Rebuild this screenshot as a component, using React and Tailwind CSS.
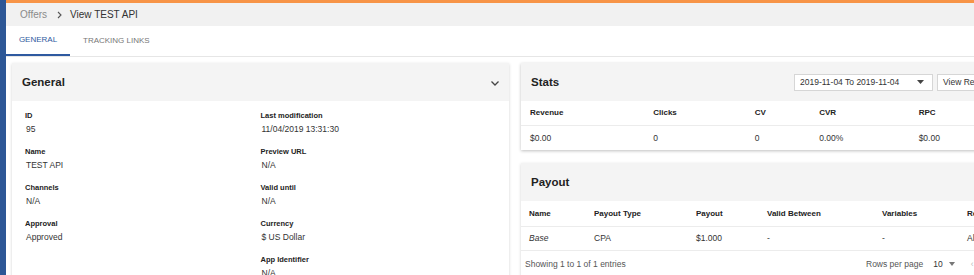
import React from 'react'

const generalLeft = [
  ['ID', '95'],
  ['Name', 'TEST API'],
  ['Channels', 'N/A'],
  ['Approval', 'Approved'],
]

const generalRight = [
  ['Last modification', '11/04/2019 13:31:30'],
  ['Preview URL', 'N/A'],
  ['Valid until', 'N/A'],
  ['Currency', '$ US Dollar'],
  ['App Identifier', 'N/A'],
]

const statsCols = [
  { label: 'Revenue', value: '$0.00', w: 'w-[124px]' },
  { label: 'Clicks', value: '0', w: 'w-[102px]' },
  { label: 'CV', value: '0', w: 'w-[65px]' },
  { label: 'CVR', value: '0.00%', w: 'w-[100px]' },
  { label: 'RPC', value: '$0.00', w: 'w-[100px]' },
]

const payoutCols = [
  { label: 'Name', value: 'Base', w: 'w-[65px]', italic: true },
  { label: 'Payout Type', value: 'CPA', w: 'w-[102px]' },
  { label: 'Payout', value: '$1.000', w: 'w-[71px]' },
  { label: 'Valid Between', value: '-', w: 'w-[115px]' },
  { label: 'Variables', value: '-', w: 'w-[85px]' },
  { label: 'Restrictions', value: 'All', w: 'w-[80px]' },
]

function Field({ label, value }) {
  return (
    <div className="h-[36px]">
      <div className="text-[7.5px] font-bold text-[#222] leading-[10px] pt-[6px]">{label}</div>
      <div className="text-[8.5px] text-[#333] leading-[10px] mt-[3px] pl-[1px]">{value}</div>
    </div>
  )
}

function PanelHeader({ title, children }) {
  return (
    <div className="h-[38px] bg-[#f4f4f4] flex items-center justify-between pl-[10px] pr-[10px] pt-[2px]">
      <h3 className="text-[11.5px] font-bold text-[#222]">{title}</h3>
      {children}
    </div>
  )
}

export default function App() {
  return (
    <div
      className="w-[974px] h-[275px] overflow-hidden flex bg-white"
      style={{ fontFamily: '"Liberation Sans", Arial, sans-serif' }}
    >
      {/* Side strip */}
      <div className="w-[6px] shrink-0 bg-[#2d5796]" />

      <div className="flex-1 min-w-0 flex flex-col">
        <div className="h-[3px] shrink-0 bg-[#f79447]" />

        {/* Breadcrumb */}
        <div className="h-[23px] shrink-0 bg-[#f1f1f1] flex items-center pl-[14px] text-[10px]">
          <span className="text-[#8a8a8a]">Offers</span>
          <svg className="ml-[9px] mr-[7px]" width="7" height="8" viewBox="0 0 7 8">
            <path d="M2 1l3 3-3 3" fill="none" stroke="#555" strokeWidth="1.1" />
          </svg>
          <span className="text-[#333]">View TEST API</span>
        </div>

        {/* Tabs */}
        <div className="h-[31px] shrink-0 flex border-b border-[#e6e6e6] text-[8px]">
          <div className="w-[64px] flex items-center justify-center text-[#2f5aa0] border-b-2 border-[#2f5aa0] font-medium">
            GENERAL
          </div>
          <div className="flex items-center ml-[13px] text-[#777]">TRACKING LINKS</div>
        </div>

        {/* Content */}
        <div className="flex shrink-0 gap-[12px] pl-[6px] pt-[6px]">
          {/* General */}
          <div className="w-[497px] shrink-0 h-[240px] bg-white shadow-[0_1px_3px_rgba(0,0,0,0.18)]">
            <PanelHeader title="General">
              <svg width="10" height="7" viewBox="0 0 10 7" className="mr-[-1px]">
                <path d="M1.5 1.5l3.5 3.5 3.5-3.5" fill="none" stroke="#444" strokeWidth="1.3" />
              </svg>
            </PanelHeader>
            <div className="grid grid-cols-2 px-[13px] pt-[4px]">
              <div>
                {generalLeft.map(([l, v]) => (
                  <Field key={l} label={l} value={v} />
                ))}
              </div>
              <div>
                {generalRight.map(([l, v]) => (
                  <Field key={l} label={l} value={v} />
                ))}
              </div>
            </div>
          </div>

          {/* Right column */}
          <div className="w-[497px] shrink-0 flex flex-col gap-[13px]">
            {/* Stats */}
            <div className="bg-white shadow-[0_1px_3px_rgba(0,0,0,0.25)]">
              <PanelHeader title="Stats">
                <div className="flex gap-[4px] mr-[-10px] mt-[-2px]">
                  <div className="w-[139px] h-[17px] bg-white border border-[#d6d6d6] flex items-center justify-between pl-[5px] pr-[8px] text-[8.5px] text-[#333]">
                    <span>2019-11-04 To 2019-11-04</span>
                    <svg width="7" height="4" viewBox="0 0 7 4">
                      <path d="M0 0h7L3.5 4z" fill="#444" />
                    </svg>
                  </div>
                  <div className="w-[81px] h-[17px] bg-white border border-[#d6d6d6] flex items-center pl-[5px] text-[8.5px] text-[#333] whitespace-nowrap">
                    View Report
                  </div>
                </div>
              </PanelHeader>
              <div className="flex h-[25px] items-center pl-[9px] border-b border-[#ececec] text-[8px] font-bold text-[#222]">
                {statsCols.map((c) => (
                  <div key={c.label} className={c.w}>{c.label}</div>
                ))}
              </div>
              <div className="flex h-[24px] items-center pl-[9px] text-[8.5px] text-[#333]">
                {statsCols.map((c) => (
                  <div key={c.label} className={c.w}>{c.value}</div>
                ))}
              </div>
            </div>

            {/* Payout */}
            <div className="bg-white shadow-[0_1px_3px_rgba(0,0,0,0.18)]">
              <PanelHeader title="Payout" />
              <div className="flex h-[26px] items-center pl-[8px] border-b border-[#ececec] text-[8px] font-bold text-[#222] whitespace-nowrap">
                {payoutCols.map((c) => (
                  <div key={c.label} className={`${c.w} shrink-0`}>{c.label}</div>
                ))}
              </div>
              <div className="flex h-[24px] items-center pl-[8px] border-b border-[#ececec] text-[8.5px] text-[#333] whitespace-nowrap">
                {payoutCols.map((c) => (
                  <div key={c.label} className={`${c.w} shrink-0 ${c.italic ? 'italic' : ''}`}>{c.value}</div>
                ))}
              </div>
              <div className="flex h-[26px] items-center pl-[4px] text-[8.5px] text-[#555] whitespace-nowrap">
                <span className="w-[341px]">Showing 1 to 1 of 1 entries</span>
                <span>Rows per page</span>
                <span className="ml-[10px] text-[#333]">10</span>
                <svg className="ml-[6px]" width="6" height="4" viewBox="0 0 6 4">
                  <path d="M0 0h6L3 4z" fill="#777" />
                </svg>
                <span className="ml-[16px] text-[#bbb]">&lsaquo;</span>
              </div>
            </div>
          </div>
        </div>
      </div>
    </div>
  )
}
